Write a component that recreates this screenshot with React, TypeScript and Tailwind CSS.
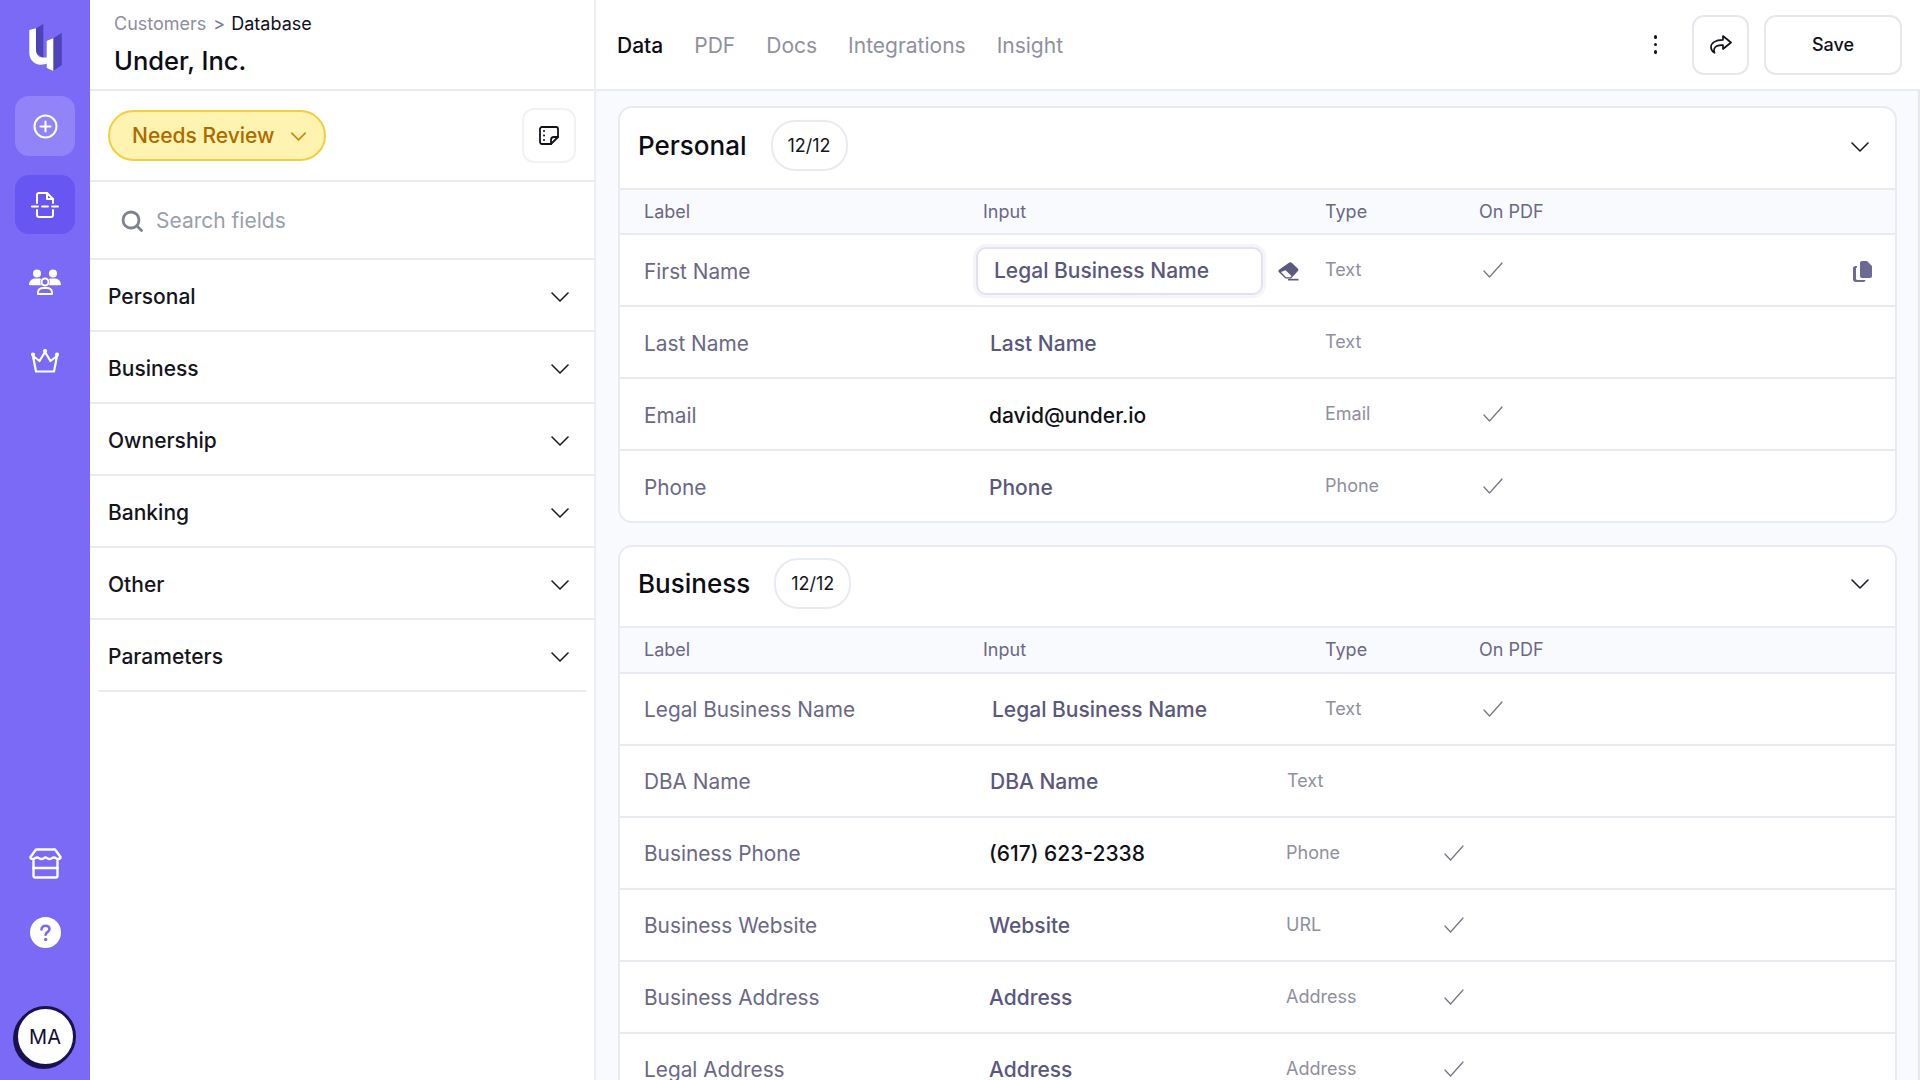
const sections = ['Personal', 'Business', 'Ownership', 'Banking', 'Other', 'Parameters'];

const tabs = ['PDF', 'Docs', 'Integrations', 'Insight'];

const personalRows = [
  { label: 'First Name', value: 'Legal Business Name', type: 'Text', check: true, editing: true },
  { label: 'Last Name', value: 'Last Name', type: 'Text', valuePad: 'pl-[7px]' },
  { label: 'Email', value: 'david@under.io', type: 'Email', check: true, dark: true, valuePad: 'pl-[6px]' },
  { label: 'Phone', value: 'Phone', type: 'Phone', check: true, valuePad: 'pl-[6px]' },
];

const businessRows = [
  { label: 'Legal Business Name', value: 'Legal Business Name', type: 'Text', check: true, valuePad: 'pl-[9px]' },
  { label: 'DBA Name', value: 'DBA Name', type: 'Text', inputWidth: 'w-[304px]', valuePad: 'pl-[7px]' },
  { label: 'Business Phone', value: '(617) 623-2338', type: 'Phone', check: true, dark: true, inputWidth: 'w-[303px]', valuePad: 'pl-[6px]' },
  { label: 'Business Website', value: 'Website', type: 'URL', check: true, inputWidth: 'w-[303px]', valuePad: 'pl-[6px]' },
  { label: 'Business Address', value: 'Address', type: 'Address', check: true, inputWidth: 'w-[303px]', valuePad: 'pl-[6px]' },
  { label: 'Legal Address', value: 'Address', type: 'Address', check: true, inputWidth: 'w-[303px]', valuePad: 'pl-[6px]' },
];

const Chevron = ({ className = 'w-[18px] h-[10px]', color = '#1b1b26', width = '1.6' }: { className?: string; color?: string; width?: string }) => (
  <svg className={className} viewBox="0 0 18 10" fill="none" stroke={color} strokeWidth={width} strokeLinecap="round" strokeLinejoin="round">
    <path d="M1 1l8 8 8-8" />
  </svg>
);

const Check = () => (
  <svg className="w-[20px] h-[16px]" viewBox="0 0 20 16" fill="none" stroke="#77778c" strokeWidth="1.3" strokeLinecap="round" strokeLinejoin="round">
    <path d="M1 9l5.500 6L19 1" />
  </svg>
);

const Logo = () => (
  <svg className="w-[34px] h-[47px]" viewBox="0 0 34 47">
    <path d="M8 4.300L15.300 0v34L8 29z" fill="#4f43b8" />
    <path d="M19 16.500l6.500-2.200 8.300-5.600V41l-8.500 6-6.300-3z" fill="#4f43b8" />
    <path d="M18.700 16.700l6.600-2.400V47l-6.600-3z" fill="#ffffff" />
    <path d="M1.300 6L8 4.300V26c0 4.500 3 7.500 6.500 7.500h4.500v6c-2 .9-5 1.500-8.500 1-5.500-1-9.200-6-9.200-12z" fill="#ffffff" />
  </svg>
);

const PlusIcon = () => (
  <svg className="w-[25px] h-[25px]" viewBox="0 0 25 25" fill="none" stroke="#fff" strokeWidth="2" strokeLinecap="round">
    <circle cx="12.500" cy="12.500" r="11" />
    <path d="M12.500 7.500v10M7.500 12.500h10" />
  </svg>
);

const FileScanIcon = () => (
  <svg className="w-[28px] h-[26px]" viewBox="0 0 28 26" fill="none" stroke="#fff" strokeWidth="2" strokeLinecap="round" strokeLinejoin="round">
    <path d="M6 11V3a2 2 0 012-2h8l6 6v4" />
    <path d="M16 1v6h6" />
    <path d="M1 14.500h6M11 14.500h6M21 14.500h6" />
    <path d="M6 18v5a2 2 0 002 2h12a2 2 0 002-2v-5" />
  </svg>
);

const UsersIcon = () => (
  <svg className="w-[32px] h-[26px]" viewBox="0 0 32 26" fill="#fff">
    <circle cx="8" cy="4.500" r="4" />
    <circle cx="24" cy="4.500" r="4" />
    <path d="M0 16c0-4 3-6.500 6-6.500h4c.8 0 1.500.1 2 .4-.5 1-.8 2-.8 3.100 0 1.200.4 2.300 1 3.200H1c-.6 0-1-.2-1-.2z" />
    <path d="M32 16c0-4-3-6.500-6-6.500h-4c-.8 0-1.500.1-2 .4.5 1 .8 2 .8 3.100 0 1.200-.4 2.300-1 3.200H31c.6 0 1-.2 1-.2z" />
    <circle cx="16" cy="13" r="3.500" fill="none" stroke="#fff" strokeWidth="2" />
    <path d="M9 25v-1.500c0-3 2.500-4.500 5-4.500h4c2.500 0 5 1.500 5 4.500V25z" fill="none" stroke="#fff" strokeWidth="2" strokeLinejoin="round" />
  </svg>
);

const CrownIcon = () => (
  <svg className="w-[28px] h-[24px]" viewBox="0 0 28 24" fill="none" stroke="#fff" strokeWidth="2.200" strokeLinecap="round" strokeLinejoin="round">
    <path d="M5 22.500h18L26 7l-6.500 5L14 3 8.500 12 2 7z" />
    <circle cx="14" cy="2" r="1" fill="#fff" />
    <circle cx="2" cy="5.500" r="1" fill="#fff" />
    <circle cx="26" cy="5.500" r="1" fill="#fff" />
  </svg>
);

const StoreIcon = () => (
  <svg className="w-[33px] h-[31px]" viewBox="0 0 33 31" fill="none" stroke="#fff" strokeWidth="2.400" strokeLinecap="round" strokeLinejoin="round">
    <path d="M7 1.500h19l5.500 7.500c0 1-1 2-2.500 2-2 0-2-1.500-4-1.500s-2.500 1.500-4.500 1.500-2.500-1.500-4-1.500-2 1.500-4 1.500-2.500-1.500-4.500-1.500-2 1.500-4 1.500C2.500 11 1.500 10 1.500 9z" />
    <path d="M4.500 13v15a1.500 1.500 0 001.500 1.500h21a1.500 1.500 0 001.500-1.500V13" />
    <path d="M4.500 20h24" />
  </svg>
);

const HelpIcon = () => (
  <svg className="w-[31px] h-[31px]" viewBox="0 0 31 31">
    <circle cx="15.500" cy="15.500" r="15.500" fill="#fff" />
    <path d="M11.500 12.500c0-2.500 2-3.800 4-3.800s4 1.300 4 3.400c0 3-3.800 3-3.800 5.600" fill="none" stroke="#7a6af6" strokeWidth="2.600" strokeLinecap="round" />
    <circle cx="15.700" cy="22.500" r="1.700" fill="#7a6af6" />
  </svg>
);

const NoteIcon = () => (
  <svg className="w-[20px] h-[19px]" viewBox="0 0 20 19" fill="none" stroke="#111118" strokeWidth="1.800" strokeLinecap="round" strokeLinejoin="round">
    <path d="M12 18H3a2 2 0 01-2-2V3a2 2 0 012-2h14a2 2 0 012 2v8z" />
    <path d="M12 18v-4a3 3 0 013-3h4" />
    <path d="M5 5h.01M5 9.500h.01M5 14h.01" strokeWidth="2" />
  </svg>
);

const SearchIcon = () => (
  <svg className="w-[22px] h-[22px]" viewBox="0 0 22 22" fill="none" stroke="#7f828f" strokeWidth="2.800" strokeLinecap="round">
    <circle cx="10" cy="10" r="8" />
    <path d="M16 16l4.500 4.500" />
  </svg>
);

const ShareIcon = () => (
  <svg className="w-[22px] h-[19px]" viewBox="0 0 22 19" fill="none" stroke="#111118" strokeWidth="1.700" strokeLinecap="round" strokeLinejoin="round">
    <path d="M13 1l8 6.500-8 6.500v-3.800c-4.500-.2-7.500.7-8.600 3.300-.5 1.200-.5 2.600.1 4.300C2.600 16.600 1 14.700 1 12.300 1 7.800 5.500 4.900 13 4.800z" />
  </svg>
);

const EraserIcon = () => (
  <svg className="w-[21px] h-[19px]" viewBox="0 0 21 19" fill="#5d5a80">
    <path d="M11 .8a2 2 0 012.700 0l6 5.700a2 2 0 010 2.800l-6.700 7.200H7.500L1 10.300a1.800 1.800 0 010-2.500z" />
    <path d="M3 10l5 5.300h4.300l1.200-1.300-6-5.800z" fill="#fff" />
    <path d="M10 16.800h10.500V18.500H10z" />
  </svg>
);

const CopyIcon = () => (
  <svg className="w-[19px] h-[21px]" viewBox="0 0 19 21" fill="#6c6992">
    <path d="M7 2a2 2 0 012-2h5l5 5v10a2 2 0 01-2 2H9a2 2 0 01-2-2z" />
    <path d="M4 5H2.500A2.500 2.500 0 000 7.500V18a3 3 0 003 3h7.500a2 2 0 002-2h-8A1.500 1.500 0 013 17.500V7.500A1 1 0 014 6.500z" />
  </svg>
);

type RowData = {
  label: string;
  value: string;
  type: string;
  check?: boolean;
  dark?: boolean;
  editing?: boolean;
  inputWidth?: string;
  valuePad?: string;
};

const Row = ({ row, textClass }: { row: RowData; textClass: string }) => (
  <div className="flex h-[72px] items-center border-t-2 border-[#e9ebf2] pt-[2px] text-[21px]">
    <div className={`${textClass} w-[363px] pl-[24px] text-[20.8px] text-[#6a6886]`}>{row.label}</div>
    <div className={`${row.inputWidth ?? 'w-[342px]'} flex items-center`}>
      {row.editing ? (
        <>
          <div className="-ml-[7px] flex h-[48px] w-[287px] items-center rounded-[10px] border-2 border-[#e2e3ee] pl-[16px] font-medium text-[#5a577c] shadow-[0_0_0_3px_#f4f5f9]">
            {row.value}
          </div>
          <span className="ml-[15px] mt-[1px]">
            <EraserIcon />
          </span>
        </>
      ) : (
        <div className={`${textClass} ${row.valuePad} font-medium ${row.dark ? 'text-[#101018]' : 'text-[#5a577c]'}`}>{row.value}</div>
      )}
    </div>
    <div className="-mt-[3px] w-[158px] text-[18px] text-[#8f8f9f]">{row.type}</div>
    <div className="-mt-[3px] flex flex-1 items-center justify-between pr-[23px]">
      {row.check && <Check />}
      {row.editing && (
        <span className="mt-[3px]">
          <CopyIcon />
        </span>
      )}
    </div>
  </div>
);

const Card = ({
  title,
  rows,
  headerClass,
  headClass,
  textClass,
}: {
  title: string;
  rows: RowData[];
  headerClass: string;
  headClass: string;
  textClass: string;
}) => (
  <section className="shrink-0 overflow-hidden rounded-[14px] border-2 border-[#e9ebf2] bg-white">
    <header className={`${headerClass} flex items-center pl-[18px] pr-[26px]`}>
      <h2 className="text-[26px] font-medium text-[#0c0c14]">{title}</h2>
      <span className="ml-[24px] flex h-[51px] w-[77px] items-center justify-center rounded-[24px] border-2 border-[#e9ebf2] text-[18px] text-[#14141c]">
        12/12
      </span>
      <span className="ml-auto mt-[2px]">
        <Chevron />
      </span>
    </header>
    <div className={`${headClass} flex items-center border-t-2 border-[#e9ebf2] bg-[#f9fafd] text-[18px] text-[#6a6886]`}>
      <div className="w-[363px] pl-[24px]">Label</div>
      <div className="w-[342px]">Input</div>
      <div className="w-[154px]">Type</div>
      <div>On PDF</div>
    </div>
    {rows.map((row) => (
      <Row key={row.label} row={row} textClass={textClass} />
    ))}
  </section>
);

export default function App() {
  return (
    <div className="flex h-screen w-full overflow-hidden bg-white font-['Inter',sans-serif]">
      <aside className="flex w-[90px] shrink-0 flex-col items-center bg-[#7a6af6] pb-[13px] pt-[24px]">
        <Logo />
        <button className="mt-[25px] flex h-[60px] w-[60px] items-center justify-center rounded-[14px] bg-[#9283f8]">
          <PlusIcon />
        </button>
        <button className="mt-[19px] flex h-[59px] w-[60px] items-center justify-center rounded-[14px] bg-[#6756f2]">
          <FileScanIcon />
        </button>
        <div className="mt-[35px]">
          <UsersIcon />
        </div>
        <div className="mt-[54px]">
          <CrownIcon />
        </div>
        <div className="mt-auto">
          <StoreIcon />
        </div>
        <div className="mt-[38px]">
          <HelpIcon />
        </div>
        <div className="mt-[58px] flex h-[61px] w-[61px] items-center justify-center rounded-full border-[3px] border-[#1a1150] bg-white text-[20px] font-normal text-[#120c3a] shadow-[-2px_2px_0_#1a1150]">
          MA
        </div>
      </aside>

      <div className="flex w-[506px] shrink-0 flex-col border-r-2 border-[#eceef3]">
        <div className="flex h-[91px] shrink-0 flex-col border-b-2 border-[#e9ebf2] pl-[24px] pt-[10px]">
          <div className="flex items-center text-[18px] text-[#8e8e9c]">
            Customers
            <span className="ml-[7px] mr-[6px] text-[#77778a]">&gt;</span>
            <span className="text-[#101018]">Database</span>
          </div>
          <h1 className="mt-[8px] text-[25.5px] font-medium leading-[32px] text-[#0c0c14]">Under, Inc.</h1>
        </div>
        <div className="flex h-[91px] shrink-0 items-center justify-between border-b-2 border-[#e9ebf2] pl-[18px] pr-[18px]">
          <button className="flex h-[51px] w-[218px] items-center rounded-full border-2 border-[#f3cf3c] bg-[#fef3b0] pl-[22px] pt-[1px] text-[21px] font-medium text-[#ad6a00]">
            Needs Review
            <Chevron className="ml-[17px] h-[9px] w-[15px]" color="#c98a10" width="2" />
          </button>
          <button className="flex h-[55px] w-[54px] items-center justify-center rounded-[12px] border-2 border-[#f1f2f6]">
            <NoteIcon />
          </button>
        </div>
        <div className="flex h-[78px] shrink-0 items-center gap-[13px] border-b-2 border-[#e9ebf2] pl-[31px] pt-[2px]">
          <SearchIcon />
          <span className="text-[21px] text-[#9a9eae]">Search fields</span>
        </div>
        {sections.map((name, i) => (
          <div
            key={name}
            className={`flex h-[72px] shrink-0 items-center justify-between border-b-2 border-[#e9ebf2] pt-[4px] text-[21px] font-medium text-[#14141c] ${
              i === sections.length - 1 ? 'mx-[8px] pl-[10px] pr-[17px]' : 'pl-[18px] pr-[25px]'
            }`}
          >
            {name}
            <Chevron />
          </div>
        ))}
      </div>

      <div className="flex min-w-0 flex-1 flex-col">
        <div className="flex h-[91px] shrink-0 items-center border-b-2 border-[#e9ebf2] pl-[21px] pr-[18px]">
          <div className="mt-[2px] flex items-center gap-[31px] text-[21px]">
            <span className="font-medium text-[#0c0c14]">Data</span>
            {tabs.map((tab) => (
              <span key={tab} className="text-[#8f90a0]">
                {tab}
              </span>
            ))}
          </div>
          <div className="ml-auto flex flex-col gap-[4px]">
            <span className="h-[3.5px] w-[3.5px] rounded-full bg-[#17171f]" />
            <span className="h-[3.5px] w-[3.5px] rounded-full bg-[#17171f]" />
            <span className="h-[3.5px] w-[3.5px] rounded-full bg-[#17171f]" />
          </div>
          <button className="ml-[35px] flex h-[60px] w-[57px] items-center justify-center rounded-[12px] border-2 border-[#e6e8f0]">
            <ShareIcon />
          </button>
          <button className="ml-[15px] h-[60px] w-[138px] rounded-[12px] border-2 border-[#e6e8f0] text-[18px] font-medium text-[#101018]">
            Save
          </button>
        </div>
        <main className="flex min-h-0 flex-1 flex-col gap-[22px] overflow-hidden border-r-2 border-[#e6e8ef] bg-[#f9fafd] pl-[22px] pr-[21px] pt-[15px]">
          <Card title="Personal" rows={personalRows} headerClass="h-[80px] pb-[5px]" headClass="h-[45px]" textClass="mt-[2px]" />
          <Card title="Business" rows={businessRows} headerClass="h-[79px] pb-[7px]" headClass="h-[46px] pb-[2px]" textClass="" />
        </main>
      </div>
    </div>
  );
}
